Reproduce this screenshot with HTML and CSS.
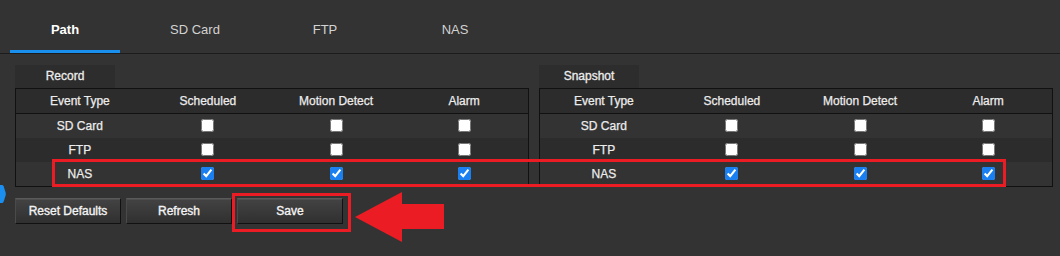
FILE: index.html
```html
<!DOCTYPE html>
<html>
<head>
<meta charset="utf-8">
<link rel="stylesheet" href="styles.css">
</head>
<body>
<div class="page">
  <div class="tabbar">
    <div class="tab active">Path</div>
    <div class="tab">SD Card</div>
    <div class="tab">FTP</div>
    <div class="tab">NAS</div>
  </div>
  <div class="content">
    <div class="panel">
      <div class="panel-title">Record</div>
      <table class="grid">
        <thead>
          <tr><th>Event Type</th><th>Scheduled</th><th>Motion Detect</th><th>Alarm</th></tr>
        </thead>
        <tbody>
          <tr class="odd"><td>SD Card</td><td><input type="checkbox"></td><td><input type="checkbox"></td><td><input type="checkbox"></td></tr>
          <tr class="even"><td>FTP</td><td><input type="checkbox"></td><td><input type="checkbox"></td><td><input type="checkbox"></td></tr>
          <tr class="odd"><td>NAS</td><td><input type="checkbox" checked></td><td><input type="checkbox" checked></td><td><input type="checkbox" checked></td></tr>
        </tbody>
      </table>
    </div>
    <div class="panel">
      <div class="panel-title">Snapshot</div>
      <table class="grid">
        <thead>
          <tr><th>Event Type</th><th>Scheduled</th><th>Motion Detect</th><th>Alarm</th></tr>
        </thead>
        <tbody>
          <tr class="odd"><td>SD Card</td><td><input type="checkbox"></td><td><input type="checkbox"></td><td><input type="checkbox"></td></tr>
          <tr class="even"><td>FTP</td><td><input type="checkbox"></td><td><input type="checkbox"></td><td><input type="checkbox"></td></tr>
          <tr class="odd"><td>NAS</td><td><input type="checkbox" checked></td><td><input type="checkbox" checked></td><td><input type="checkbox" checked></td></tr>
        </tbody>
      </table>
    </div>
  </div>
  <div class="actions">
    <button class="btn">Reset Defaults</button>
    <button class="btn">Refresh</button>
    <button class="btn">Save</button>
  </div>

  <svg class="side-handle" width="6" height="18" viewBox="0 0 6 18"><path d="M0 0 L2 0 Q3 0 3.6 1.2 L5.6 7.5 Q6 9 5.6 10.5 L3.6 16.8 Q3 18 2 18 L0 18 Z" fill="#1a8ff0"/></svg>
  <div class="hl hl-row"></div>
  <div class="hl hl-save"></div>
  <svg class="arrow" width="92" height="52" viewBox="0 0 92 52"><polygon points="1,26 48,1 48,13 90,13 90,38 48,38 48,51" fill="#ec1c24"/></svg>
</div>
</body>
</html>
```
FILE: styles.css
```css
html, body {
  margin: 0;
  padding: 0;
  background: #333333;
}
body {
  font-family: "Liberation Sans", Arial, sans-serif;
  color: #e8e8e8;
}
.page {
  position: relative;
  width: 1060px;
  height: 256px;
  overflow: hidden;
}
.tabbar {
  display: flex;
  gap: 20px;
  padding-left: 10px;
  border-bottom: 1px solid #1c1c1c;
}
.tab {
  width: 110px;
  height: 53px;
  box-sizing: border-box;
  padding-top: 22px;
  line-height: 16px;
  font-size: 13px;
  text-align: center;
  color: #d2d2d2;
  border-bottom: 3px solid transparent;
}
.tab.active {
  color: #ffffff;
  font-weight: bold;
  border-bottom-color: #1a90ee;
}
.content {
  display: flex;
  gap: 10px;
  padding: 11px 0 0 15px;
}
.panel {
  width: 514px;
}
.panel-title {
  width: 100px;
  height: 23px;
  line-height: 23px;
  background: #2d2d2d;
  text-align: center;
  font-size: 12px;
  color: #ececec;
  -webkit-text-stroke: 0.3px #ececec;
}
.grid {
  width: 514px;
  border-collapse: collapse;
  table-layout: fixed;
  border: 1px solid #111111;
}
.grid th, .grid td {
  height: 24px;
  padding: 0;
  text-align: center;
  font-size: 12px;
  font-weight: normal;
  color: #ececec;
  -webkit-text-stroke: 0.25px #ececec;
}
.grid thead tr {
  background: #2c2c2c;
  border-bottom: 1px solid #111111;
}
.grid tr.odd { background: #333333; }
.grid tr.even { background: #2c2c2c; }
.grid input[type=checkbox] {
  margin: 0;
  width: 13px;
  height: 13px;
  vertical-align: middle;
  accent-color: #1a7ff0;
  position: relative;
  top: -1px;
}
.actions {
  display: flex;
  gap: 5px;
  padding-left: 15px;
  margin-top: 11px;
}
.btn {
  width: 106px;
  height: 26px;
  box-sizing: border-box;
  padding: 0;
  font-family: "Liberation Sans", Arial, sans-serif;
  font-size: 12px;
  color: #f4f4f4;
  -webkit-text-stroke: 0.35px #f4f4f4;
  background: linear-gradient(#434343, #303030);
  border: 1px solid #111111;
  border-top-color: #5a5a5a;
  border-left-color: #4a4a4a;
  box-shadow: inset 0 1px 0 #4e4e4e;
}
.side-handle {
  position: absolute;
  left: 0;
  top: 185px;
}
.hl {
  position: absolute;
  box-sizing: border-box;
  border: 3px solid #ec1c24;
}
.hl-row {
  left: 52px;
  top: 159px;
  width: 954px;
  height: 28px;
}
.hl-save {
  left: 232px;
  top: 193px;
  width: 119px;
  height: 39px;
}
.arrow {
  position: absolute;
  left: 354px;
  top: 191px;
}
```
